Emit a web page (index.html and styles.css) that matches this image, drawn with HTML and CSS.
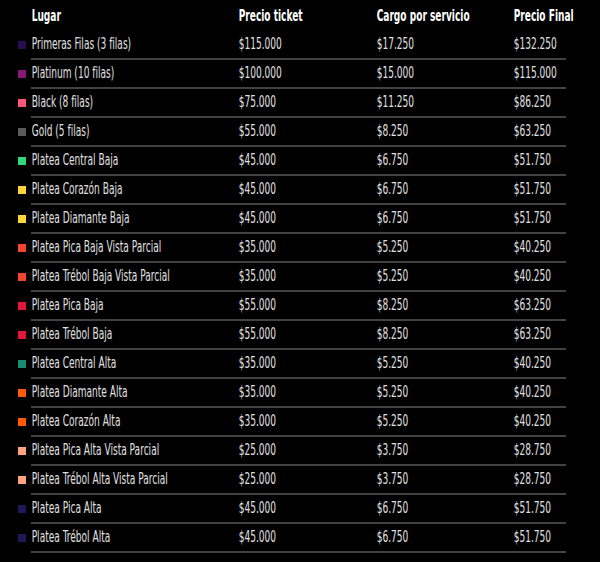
FILE: index.html
```html
<!DOCTYPE html>
<html lang="es">
<head>
<meta charset="utf-8">
<title>Precios</title>
<link rel="stylesheet" href="styles.css">
</head>
<body>
<div class="table">
  <div class="head">
    <span class="sw-empty"></span>
    <div class="cells">
      <span>Lugar</span><span>Precio ticket</span><span>Cargo por servicio</span><span>Precio Final</span>
    </div>
  </div>
  <div class="row"><span class="sw c-primeras"></span><div class="cells"><span>Primeras Filas (3 filas)</span><span>$115.000</span><span>$17.250</span><span>$132.250</span></div></div>
  <div class="row"><span class="sw c-platinum"></span><div class="cells"><span>Platinum (10 filas)</span><span>$100.000</span><span>$15.000</span><span>$115.000</span></div></div>
  <div class="row"><span class="sw c-black"></span><div class="cells"><span>Black (8 filas)</span><span>$75.000</span><span>$11.250</span><span>$86.250</span></div></div>
  <div class="row"><span class="sw c-gold"></span><div class="cells"><span>Gold (5 filas)</span><span>$55.000</span><span>$8.250</span><span>$63.250</span></div></div>
  <div class="row"><span class="sw c-green"></span><div class="cells"><span>Platea Central Baja</span><span>$45.000</span><span>$6.750</span><span>$51.750</span></div></div>
  <div class="row"><span class="sw c-yellow"></span><div class="cells"><span>Platea Corazón Baja</span><span>$45.000</span><span>$6.750</span><span>$51.750</span></div></div>
  <div class="row"><span class="sw c-yellow"></span><div class="cells"><span>Platea Diamante Baja</span><span>$45.000</span><span>$6.750</span><span>$51.750</span></div></div>
  <div class="row"><span class="sw c-redorange"></span><div class="cells"><span>Platea Pica Baja Vista Parcial</span><span>$35.000</span><span>$5.250</span><span>$40.250</span></div></div>
  <div class="row"><span class="sw c-redorange"></span><div class="cells"><span>Platea Trébol Baja Vista Parcial</span><span>$35.000</span><span>$5.250</span><span>$40.250</span></div></div>
  <div class="row"><span class="sw c-red"></span><div class="cells"><span>Platea Pica Baja</span><span>$55.000</span><span>$8.250</span><span>$63.250</span></div></div>
  <div class="row"><span class="sw c-red"></span><div class="cells"><span>Platea Trébol Baja</span><span>$55.000</span><span>$8.250</span><span>$63.250</span></div></div>
  <div class="row"><span class="sw c-teal"></span><div class="cells"><span>Platea Central Alta</span><span>$35.000</span><span>$5.250</span><span>$40.250</span></div></div>
  <div class="row"><span class="sw c-orange"></span><div class="cells"><span>Platea Diamante Alta</span><span>$35.000</span><span>$5.250</span><span>$40.250</span></div></div>
  <div class="row"><span class="sw c-orange"></span><div class="cells"><span>Platea Corazón Alta</span><span>$35.000</span><span>$5.250</span><span>$40.250</span></div></div>
  <div class="row"><span class="sw c-peach"></span><div class="cells"><span>Platea Pica Alta Vista Parcial</span><span>$25.000</span><span>$3.750</span><span>$28.750</span></div></div>
  <div class="row"><span class="sw c-peach"></span><div class="cells"><span>Platea Trébol Alta Vista Parcial</span><span>$25.000</span><span>$3.750</span><span>$28.750</span></div></div>
  <div class="row"><span class="sw c-navy"></span><div class="cells"><span>Platea Pica Alta</span><span>$45.000</span><span>$6.750</span><span>$51.750</span></div></div>
  <div class="row"><span class="sw c-navy"></span><div class="cells"><span>Platea Trébol Alta</span><span>$45.000</span><span>$6.750</span><span>$51.750</span></div></div>
</div>
</body>
</html>
```
FILE: styles.css
```css
*, *::before, *::after {
  box-sizing: border-box;
}
html, body {
  margin: 0;
  padding: 0;
  background: #000;
}
body {
  width: 600px;
  height: 562px;
  overflow: hidden;
  font-family: "DejaVu Sans Condensed", "DejaVu Sans", sans-serif;
  font-size: 15px;
  line-height: 17px;
  color: #e0e0e0;
}
.table {
  padding: 1px 0 0 18px;
}
.head, .row {
  display: flex;
  align-items: center;
}
.sw, .sw-empty {
  width: 8px;
  height: 8px;
  margin-right: 5px;
  margin-bottom: 2px;
  flex: none;
}
.cells {
  display: grid;
  grid-template-columns: 207px 138px 137px 53px;
  align-items: center;
  white-space: nowrap;
}
.cells span {
  display: inline-block;
  padding-left: 1px;
  transform: scaleX(0.67);
  transform-origin: left center;
}
.head .cells {
  height: 30px;
  color: #fff;
  font-weight: bold;
}
.row .cells {
  height: 29px;
  border-bottom: 2px solid #424242;
}
.c-primeras { background: #2a0d4e; }
.c-platinum { background: #8a1878; }
.c-black { background: #ff5577; }
.c-gold { background: #5a5a5a; }
.c-green { background: #2fd67a; }
.c-yellow { background: #ffd43b; }
.c-redorange { background: #f5452f; }
.c-red { background: #e3173c; }
.c-teal { background: #1b8a6e; }
.c-orange { background: #ff5a0a; }
.c-peach { background: #fda47f; }
.c-navy { background: #1f1858; }
```
